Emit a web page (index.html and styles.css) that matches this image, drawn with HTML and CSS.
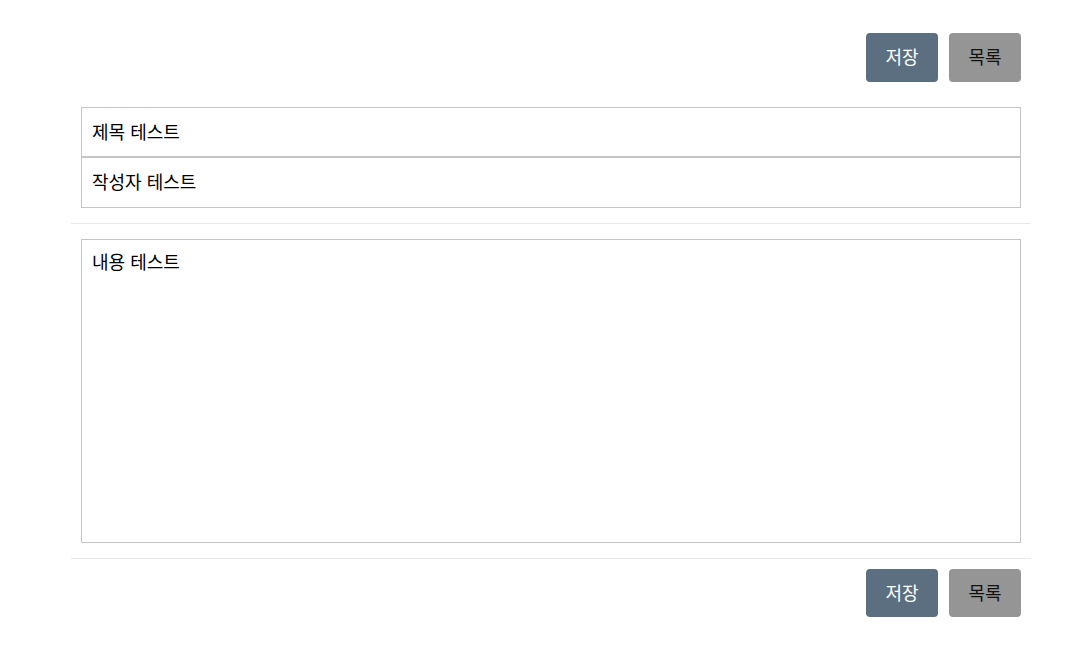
FILE: index.html
```html
<!DOCTYPE html>
<html lang="ko">
<head>
<meta charset="utf-8">
<link rel="stylesheet" href="styles.css">
</head>
<body>
<div class="page">
  <div class="actions actions-top">
    <button class="btn btn-save">저장</button>
    <button class="btn btn-list">목록</button>
  </div>
  <div class="fields">
    <input class="field" type="text" value="제목 테스트">
    <input class="field field-author" type="text" value="작성자 테스트">
  </div>
  <hr class="divider">
  <div class="content">
    <textarea class="body-text">내용 테스트</textarea>
  </div>
  <hr class="divider divider-last">
  <div class="actions actions-bottom">
    <button class="btn btn-save">저장</button>
    <button class="btn btn-list">목록</button>
  </div>
</div>
</body>
</html>
```

FILE: styles.css
```css
* { box-sizing: border-box; }
body {
  margin: 0;
  background: #fff;
  font-family: "Noto Sans CJK KR", "Noto Sans", sans-serif;
  color: #000;
}
.page {
  width: 960px;
  margin-left: 71px;
}
.actions {
  display: flex;
  justify-content: flex-end;
  gap: 11px;
  padding-right: 10px;
}
.actions-top { padding-top: 33px; }
.actions-bottom { padding-top: 10px; }
.btn {
  width: 72px;
  height: 49px;
  border: none;
  border-radius: 4px;
  font-family: inherit;
  font-size: 18px;
  cursor: pointer;
  padding: 0 0 3px;
}
.actions-bottom .btn { height: 48px; }
.btn-save { background: #5b6f80; color: #fff; }
.btn-list { background: #959595; color: #111; }
.fields {
  display: flex;
  flex-direction: column;
  padding: 25px 10px 0;
}
.field {
  height: 50px;
  border: 1px solid #c4c4c4;
  padding: 0 10px 3px;
  font-family: inherit;
  font-size: 18px;
  color: #000;
  outline: none;
}
.field-author { height: 51px; padding-bottom: 4px; }
.divider {
  margin: 15px 0;
  border: none;
  border-top: 1px solid #e8e8e8;
  height: 0;
}
.divider-last { margin-bottom: 0; }
.content { padding: 0 10px; }
.body-text {
  display: block;
  width: 100%;
  height: 304px;
  border: 1px solid #c4c4c4;
  padding: 8px 10px;
  font-family: inherit;
  font-size: 18px;
  line-height: 26px;
  color: #000;
  resize: none;
  outline: none;
}
```
